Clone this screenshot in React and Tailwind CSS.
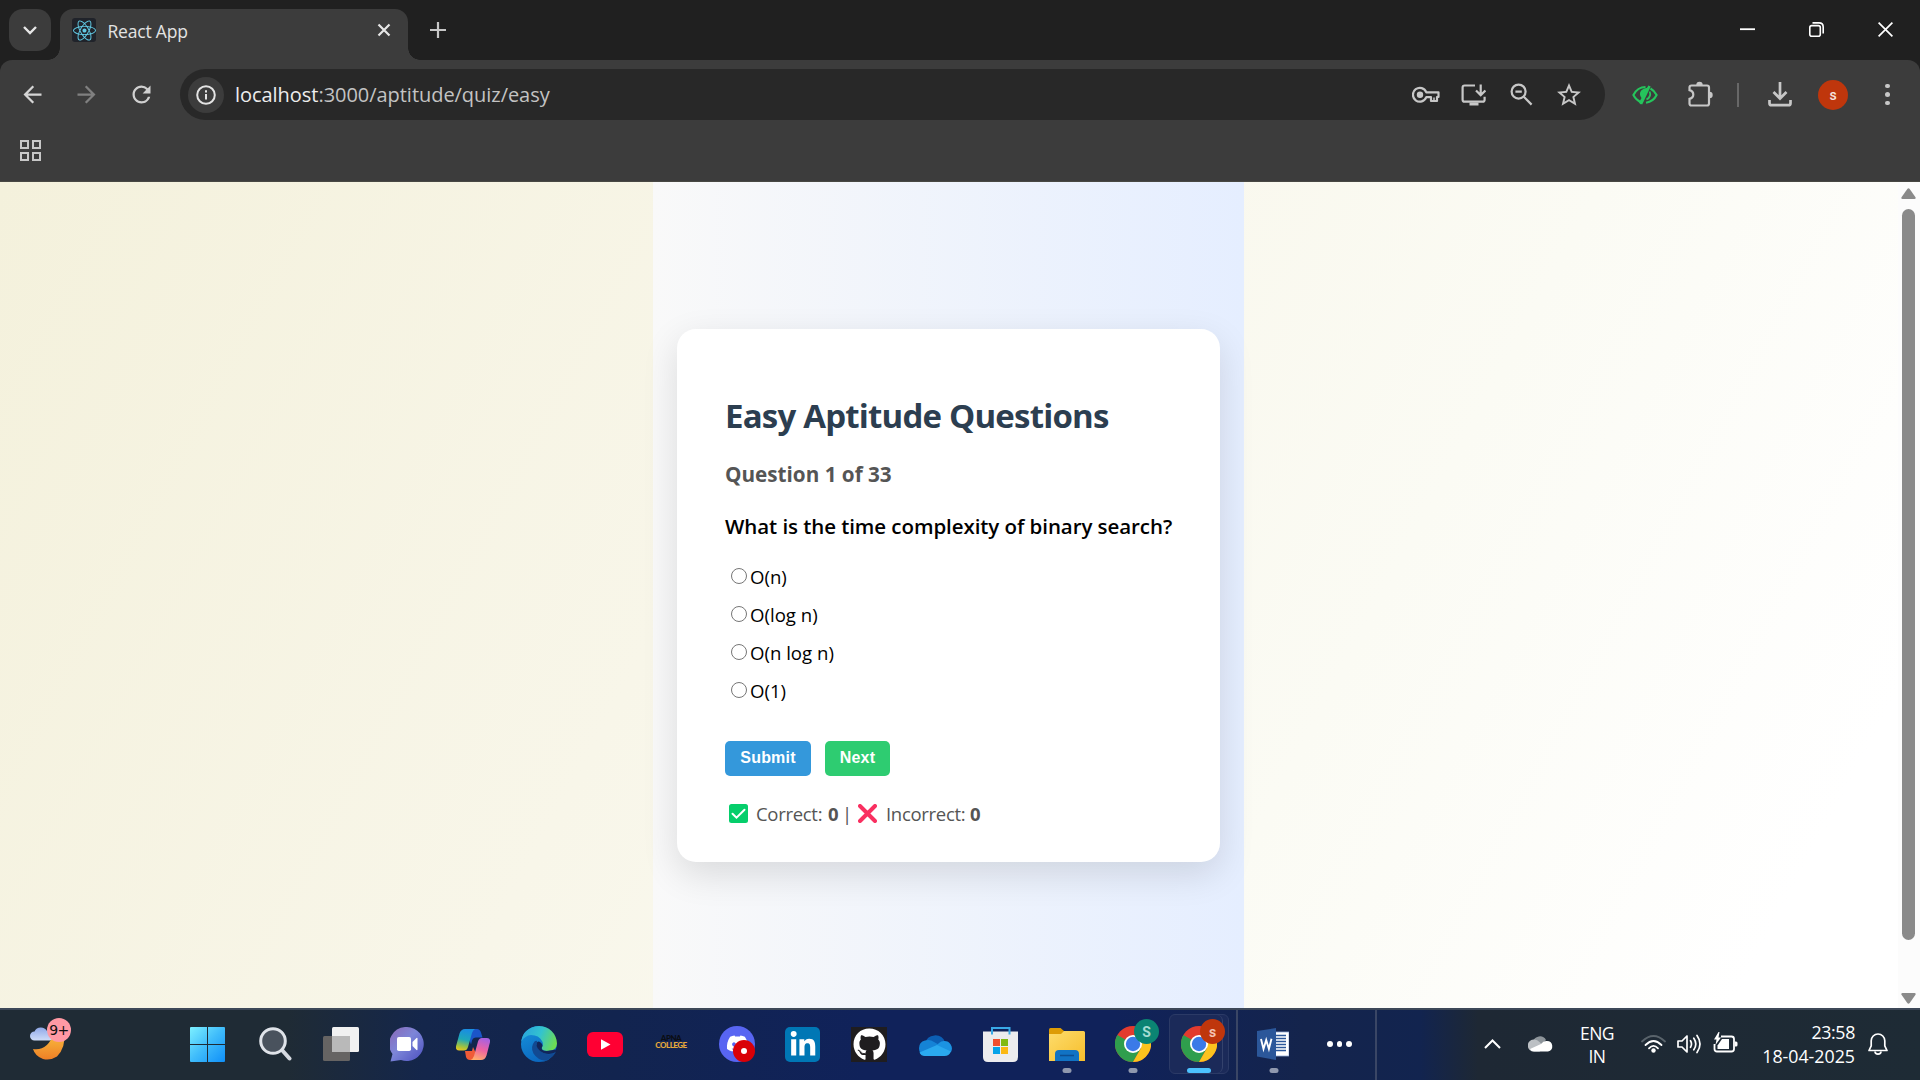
import React from 'react';
import { FaReact, FaDiscord, FaGithub, FaLinkedinIn } from 'react-icons/fa';
import { MdArrowBack, MdArrowForward, MdRefresh } from 'react-icons/md';

function TabStrip() {
  return (
    <div className="flex h-[60px] items-start bg-[#202020]">
      <button className="ml-[9px] mt-[9px] flex h-[42px] w-[42px] items-center justify-center rounded-[14px] bg-[#3c3c3c]">
        <svg width="14" height="9" viewBox="0 0 14 9" fill="none" stroke="#e6e6e6" strokeWidth="2.4">
          <path d="M1 1l6 6 6-6" />
        </svg>
      </button>
      <div className="ml-[-3px] mt-[48px] h-3 w-3 bg-[radial-gradient(circle_at_0_0,#202020_11.5px,#3c3c3c_12px)]" />
      <div className="mt-[9px] flex h-[51px] w-[348px] items-center rounded-t-[13px] bg-[#3c3c3c]">
        <div className="mb-[9px] ml-3 flex h-6 w-6 items-center justify-center rounded-[3px] bg-[#20232a]">
          <FaReact size={23} color="#61c9e3" />
        </div>
        <span className="mb-[7px] ml-[11.5px] whitespace-pre text-[17.5px] leading-6 tracking-[-0.2px] text-[#e3e3e3]">React App</span>
        <svg className="mb-[9px] ml-auto mr-[17px]" width="14" height="14" viewBox="0 0 14 14" stroke="#e6e6e6" strokeWidth="2.2">
          <path d="M1.5 1.5l11 11M12.500 1.5l-11 11" />
        </svg>
      </div>
      <div className="mt-[48px] h-3 w-3 bg-[radial-gradient(circle_at_100%_0,#202020_11.5px,#3c3c3c_12px)]" />
      <svg className="ml-[10px] mt-[22px]" width="16" height="16" viewBox="0 0 16 16" stroke="#c7c7c7" strokeWidth="2.2">
        <path d="M8 0v16M0 8h16" />
      </svg>
      <div className="ml-auto mr-[27px] mt-[22px] flex gap-[54px]">
        <svg width="15" height="15" viewBox="0 0 15 15" stroke="#fff" strokeWidth="1.8"><path d="M0 7.2h15" /></svg>
        <svg width="15" height="15" viewBox="0 0 15 15" fill="none" stroke="#fff" strokeWidth="1.6">
          <rect x=".8" y="3.600" width="10.500" height="10.600" rx="2" />
          <path d="M3.500 .9h6.500q4.200 0 4.200 4.200v6.400" />
        </svg>
        <svg width="15" height="15" viewBox="0 0 15 15" stroke="#fff" strokeWidth="1.7"><path d="M.6.6l13.800 13.800M14.400.6L.6 14.400" /></svg>
      </div>
    </div>
  );
}

function Omnibox() {
  return (
    <div className="flex h-[51px] w-[1425px] items-center rounded-full bg-[#282828]">
      <div className="ml-2 flex h-9 w-9 items-center justify-center rounded-full bg-[#3c3c3c]">
        <svg width="20" height="20" viewBox="0 0 20 20" fill="none" stroke="#e3e3e3" strokeWidth="2">
          <circle cx="10" cy="10" r="8.800" />
          <path d="M10 9v5.500M10 5.200v2.200" />
        </svg>
      </div>
      <span className="ml-[11px] whitespace-pre text-[20px] leading-7 tracking-[-0.04px] text-[#c3c3c3]">
        <span className="text-[#ededed]">localhost</span>:3000/aptitude/quiz/easy
      </span>
      <div className="ml-auto mr-[24px] flex items-center gap-[24px]">
        <svg className="-mr-[3px]" width="28" height="18" viewBox="0 0 28 18" fill="none" stroke="#c7c7c7" strokeWidth="2.200" strokeLinejoin="round">
          <path d="M14.300 6.300h12.200v4.700h-1.500v4h-6v-3.800h-4.700A6.900 6.900 0 1 1 14.300 6.300z" />
          <path d="M22 15v-3.500" strokeWidth="1.500" />
          <circle cx="8" cy="8.800" r="3.200" fill="#c7c7c7" stroke="none" />
        </svg>
        <svg width="25" height="24" viewBox="0 0 25 24" fill="none" stroke="#c7c7c7" strokeWidth="2.200">
          <path d="M14 2.500H3.600q-2 0-2 2v12.200q0 2 2 2h18q2 0 2-2v-3" />
          <path d="M19.700 1.500v10M15 7.500l4.700 4.600 4.700-4.600" />
          <path d="M8.500 21h9" strokeWidth="3" />
        </svg>
        <svg width="23" height="23" viewBox="0 0 23 23" fill="none" stroke="#c7c7c7" strokeWidth="2.200">
          <circle cx="8.600" cy="8.600" r="7" />
          <path d="M13.800 13.800l7.800 7.800M5.400 8.600h6.400" />
        </svg>
        <svg width="24" height="24" viewBox="2 2 20 20" fill="#c7c7c7">
          <path d="M22 9.240l-7.190-.62L12 2 9.190 8.630 2 9.240l5.460 4.730L5.820 21 12 17.270 18.180 21l-1.630-7.030L22 9.240zM12 15.400l-3.760 2.270 1-4.280-3.320-2.880 4.380-.38L12 6.100l1.710 4.040 4.380.38-3.320 2.880 1 4.280L12 15.400z" />
        </svg>
      </div>
    </div>
  );
}

function Toolbar() {
  return (
    <div className="bg-[#202020]">
      <div className="flex h-[122px] flex-col rounded-t-[12px] border-b border-[#484843] bg-[#3c3c3c] pt-[9px]">
        <div className="flex h-[51px] items-center">
          <MdArrowBack className="ml-[19px]" size={27} color="#d5d5d5" />
          <MdArrowForward className="ml-[27px]" size={27} color="#808080" />
          <MdRefresh className="mr-[25px] ml-[28px]" size={27} color="#d0d0d0" />
          <Omnibox />
          <svg className="ml-[27px]" width="26" height="20" viewBox="0 0 26 20" fill="none" stroke="#25c45c" strokeWidth="2.100">
            <path d="M9.800 17.500Q4.200 15.500 1.400 10 5.500 2 13.500 2" />
            <path d="M18.500 3.500Q22.500 5.800 24.600 10 21.500 16.500 14 17.800" />
            <path d="M17 .5L8.500 19.500 7 17.500 9.500 13Q6.500 9 9.200 5.500 12 2.500 15 3z" fill="#25c45c" stroke="none" />
            <path d="M17.600 6.500Q19.800 11.500 14.500 14.500" strokeWidth="1.800" />
            <path d="M17.500 1L9 19" strokeWidth="2.600" />
          </svg>
          <svg className="ml-[29px]" width="27" height="27" viewBox="0 0 27 27" fill="none" stroke="#c7c7c7" strokeWidth="2.200">
            <path d="M4.500 4.500H20q2 0 2 2v16q0 2-2 2H4.500q-2 0-2-2v-4.600q3.800-1 3.800-4.400t-3.800-4.400V6.500q0-2 2-2z" />
            <path d="M9.300 4a3.200 3.200 0 0 1 6.400 0zM22.500 10.800a3.200 3.200 0 0 1 0 6.400z" fill="#c7c7c7" stroke="none" />
          </svg>
          <div className="ml-[23px] h-[24px] w-[2px] bg-[#686868]" />
          <svg className="ml-[29px]" width="24" height="25" viewBox="0 0 24 25" fill="none" stroke="#c7c7c7" strokeWidth="2.700">
            <path d="M12 0v16M5.500 10l6.500 6.500 6.500-6.500" />
            <path d="M1.500 18v3.200q0 2 2 2h17q2 0 2-2V18" />
          </svg>
          <div className="ml-[26px] flex h-[30px] w-[30px] items-center justify-center rounded-full bg-[#bf360c] font-[Roboto] text-[14px] font-medium leading-none text-[#f6e3dc]">s</div>
          <div className="ml-[37px] flex flex-col gap-[4px]">
            <div className="h-[4.500px] w-[4.500px] rounded-full bg-[#c7c7c7]" />
            <div className="h-[4.500px] w-[4.500px] rounded-full bg-[#c7c7c7]" />
            <div className="h-[4.500px] w-[4.500px] rounded-full bg-[#c7c7c7]" />
          </div>
        </div>
        <div className="ml-[19.500px] mt-[19.500px] grid w-[21px] grid-cols-2 gap-[3px]">
          <div className="h-[9px] w-[9px] border-2 border-[#c7c7c7]" />
          <div className="h-[9px] w-[9px] border-2 border-[#c7c7c7]" />
          <div className="h-[9px] w-[9px] border-2 border-[#c7c7c7]" />
          <div className="h-[9px] w-[9px] border-2 border-[#c7c7c7]" />
        </div>
      </div>
    </div>
  );
}

function QuizCard() {
  return (
    <div className="flex h-[533px] w-[543px] flex-col rounded-[19px] bg-white px-[48px] pt-[64px] shadow-[0_12px_36px_rgba(0,0,0,0.12)]">
      <h2 className="whitespace-nowrap text-[33px] font-bold leading-[46px] tracking-[-0.8px] text-[#2c3e50]">Easy Aptitude Questions</h2>
      <h4 className="mt-[21px] text-[20.700px] font-bold leading-[28px] text-[#555]">Question 1 of 33</h4>
      <p className="mt-[24px] whitespace-nowrap text-[20.500px] font-semibold leading-[28px] tracking-[-0.07px] text-black">What is the time complexity of binary search?</p>
      <div className="mt-[18px]">
        {['O(n)', 'O(log n)', 'O(n log n)', 'O(1)'].map((o) => (
          <label key={o} className="flex h-[38px] items-center text-[18.600px] leading-[38px] text-black">
            <span className="mb-[1px] ml-[6px] mr-[3.500px] h-[15.500px] w-[15.500px] rounded-full border-[1.500px] border-[#767676] bg-white" />
            {o}
          </label>
        ))}
      </div>
      <div className="mt-[31px] flex gap-[14px] font-['Liberation_Sans',Arial,sans-serif] text-[16px] font-bold leading-[33px] text-white">
        <button className="h-[35px] w-[86px] rounded-[5px] bg-[#3498db] pb-[2px] tracking-[0.200px]">Submit</button>
        <button className="h-[35px] w-[65px] rounded-[5px] bg-[#2ecc71] pb-[2px] tracking-[0.200px]">Next</button>
      </div>
      <div className="mt-[24px] flex h-[28px] items-center whitespace-pre text-[18.500px] leading-[28px] tracking-[-0.3px] text-[#555]">
        <svg className="ml-[4px] mr-[8px]" width="19" height="19" viewBox="0 0 19 19">
          <rect width="19" height="19" rx="2.500" fill="#05ce6b" />
          <path d="M3.500 9.700l4 4 8-8" fill="none" stroke="#fff" strokeWidth="2" strokeLinecap="round" />
        </svg>
        <span className="w-[72px]">Correct:</span>
        <b className="w-[14px]">0</b>
        <span className="w-[16px]">|</span>
        <svg className="mr-[9px]" width="19" height="19" viewBox="0 0 19 19" stroke="#f92f60" strokeWidth="4" strokeLinecap="round">
          <path d="M2 2l15 15M17 2L2 17" />
        </svg>
        <span className="w-[84px]">Incorrect:</span>
        <b>0</b>
      </div>
    </div>
  );
}

function Viewport() {
  return (
    <div className="flex h-[826px] bg-[linear-gradient(118deg,#f4f1dc_0%,#f8f6e9_38%,#fbfbf4_68%,#ffffff_92%)]">
      <div className="ml-[653px] flex w-[591px] items-center justify-center bg-[linear-gradient(90deg,#f9f9f9,#e5eeff)]">
        <QuizCard />
      </div>
      <div className="ml-auto flex w-[22px] flex-col items-center bg-[#fcfcfc] pr-[2px] pt-[6px]">
        <svg width="15" height="11" viewBox="0 0 15 11" fill="#8a8a8a"><path d="M6.300 1q1.200-1.500 2.400 0l5.800 8.200q.7 1.800-1 1.800H1.500q-1.700 0-1-1.800z" /></svg>
        <div className="mt-[10px] h-[731px] w-[13px] rounded-full bg-[#8a8a8a]" />
        <svg className="mt-[53px]" width="15" height="11" viewBox="0 0 15 11" fill="#8a8a8a"><path d="M6.300 10q1.200 1.500 2.400 0l5.800-8.200q.7-1.800-1-1.800H1.500q-1.700 0-1 1.800z" /></svg>
      </div>
    </div>
  );
}

function Weather() {
  return (
    <div className="relative ml-[30px] mt-[17px] h-[36px] w-[42px]">
      <svg width="36" height="36" viewBox="0 0 36 36">
        <defs>
          <linearGradient id="moon" x1="0" y1="0" x2="0" y2="1"><stop offset="0" stopColor="#f9bc3e" /><stop offset="1" stopColor="#ee7f26" /></linearGradient>
          <linearGradient id="cl" x1="0" y1="0" x2="0" y2="1"><stop offset="0" stopColor="#8fa8e8" /><stop offset="1" stopColor="#cfdcf8" /></linearGradient>
        </defs>
        <path d="M3 24Q18 26 23 9H34Q36 22 27 31.500 20 36 13 34 5 31 3 24z" fill="url(#moon)" />
        <path d="M4.500 15.500a4.500 4.500 0 0 1 0-9A7 7 0 0 1 17 6a5 5 0 0 1 3 9.500z" fill="url(#cl)" />
      </svg>
      <div className="absolute left-[17px] top-[-7px] flex h-[24px] w-[24px] items-center justify-center rounded-full bg-[#ff99a4] font-['DejaVu_Sans',sans-serif] text-[14px] leading-none tracking-[-0.5px] text-[#111]">9+</div>
    </div>
  );
}

function Chrome({ badge, label }) {
  return (
    <div className="relative h-9 w-9">
      <svg width="36" height="36" viewBox="0 0 36 36">
        <circle cx="18" cy="18" r="18" fill="#e33b2e" />
        <path d="M18 18L2.400 9A18 18 0 0 0 18 36l7.800-13.500z" fill="#2f9e4d" />
        <path d="M18 9h15.600A18 18 0 0 1 18 36l7.800-13.500z" fill="#fcc31e" />
        <path d="M18 9H33.600L30 18z" fill="#fcc31e" />
        <circle cx="18" cy="18" r="9" fill="#fff" />
        <circle cx="18" cy="18" r="7.200" fill="#3b7ae8" />
      </svg>
      <div className={badge + ' absolute left-[19px] top-[-7px] flex h-[25px] w-[25px] items-center justify-center rounded-full font-[Roboto] text-[14px] font-bold leading-none'}>{label}</div>
    </div>
  );
}

function Dot() {
  return <div className="absolute left-1/2 top-[42px] h-[5px] w-[9px] -translate-x-1/2 rounded-full bg-[#8f98ae]" />;
}

function TaskIcons() {
  return (
    <div className="ml-[118px] mt-[19px] flex items-start">
      <svg width="35" height="35" viewBox="0 0 35 35">
        <defs><linearGradient id="win" x1="0" y1="0" x2="1" y2="1"><stop offset="0" stopColor="#7df0ff" /><stop offset=".5" stopColor="#3fbcfb" /><stop offset="1" stopColor="#0f8ff8" /></linearGradient></defs>
        <path d="M1 0h16v17H0V1q0-1 1-1zM18 0h16q1 0 1 1v16H18zM0 18h17v17H1q-1 0-1-1zM18 18h17v16q0 1-1 1H18z" fill="url(#win)" />
      </svg>
      <svg className="ml-[34px]" width="33" height="35" viewBox="0 0 33 35">
        <path d="M22.500 22.500l8 9" stroke="#d5d9e0" strokeWidth="4" strokeLinecap="round" />
        <circle cx="14" cy="14" r="12.300" fill="#49525d" stroke="#dfe3e9" strokeWidth="3" />
      </svg>
      <svg className="ml-[31px]" width="36" height="34" viewBox="0 0 36 34">
        <rect x="9" width="27" height="25" rx="1.500" fill="#f1f1f1" />
        <rect y="9" width="27" height="25" rx="1.500" fill="#666463" />
        <rect x="9" y="9" width="18" height="16" fill="#b9b9b9" />
      </svg>
      <svg className="ml-[31px]" width="34" height="35" viewBox="0 0 34 35">
        <defs><linearGradient id="chat" x1="0" y1="0" x2="1" y2="1"><stop offset="0" stopColor="#8b67b5" /><stop offset=".45" stopColor="#7d86d8" /><stop offset="1" stopColor="#4b4fc0" /></linearGradient></defs>
        <path d="M17 0a17 17 0 1 1-6 33L.5 34.500 2.500 27A17 17 0 0 1 17 0z" fill="url(#chat)" />
        <rect x="7" y="10" width="14" height="14" rx="1.800" fill="#fff" />
        <path d="M22.500 15l4-4q1-.5 1 .8v10.500q0 1.300-1 .8l-4-4z" fill="#fff" />
      </svg>
      <svg className="ml-[32px] mt-[2px]" width="34" height="31" viewBox="0 0 34 31">
        <defs>
          <linearGradient id="cp1" x1=".3" y1="0" x2=".1" y2="1"><stop offset="0" stopColor="#1a8ee0" /><stop offset=".45" stopColor="#1fa8b8" /><stop offset=".8" stopColor="#a8c33a" /><stop offset="1" stopColor="#f2c61c" /></linearGradient>
          <linearGradient id="cp2" x1=".6" y1="0" x2=".3" y2="1"><stop offset="0" stopColor="#a861e0" /><stop offset=".5" stopColor="#ee63a2" /><stop offset="1" stopColor="#ffae6b" /></linearGradient>
        </defs>
        <path d="M10 0h11q3 0 4 3.500l1.500 5H20q-3 0-4 3l-1 4L10 0z" fill="#1b55c9" />
        <path d="M9 22h7l1-4 6 13H14q-3 0-4-3z" fill="#ef5b37" />
        <path d="M9 0h10q-2 1-3 4l-4 14q-1 3.500-4 3.500H3q-4.500 0-2.500-6l3-11Q5 0 9 0z" fill="url(#cp1)" />
        <path d="M25 31H14.500q2.500-1 3.500-4l4-14.500q1-3.500 4-3.500h5q4.500 0 2.500 6l-3 11.500Q29 31 25 31z" fill="url(#cp2)" />
      </svg>
      <svg className="ml-[31px] -mt-[1px]" width="36" height="36" viewBox="0 0 36 36">
        <defs>
          <linearGradient id="e1" x1="0" y1=".3" x2="1" y2=".6"><stop offset="0" stopColor="#2aa5dd" /><stop offset=".5" stopColor="#33c3cf" /><stop offset="1" stopColor="#6fdc4f" /></linearGradient>
          <linearGradient id="e2" x1="0" y1="0" x2=".5" y2="1"><stop offset="0" stopColor="#1794dc" /><stop offset="1" stopColor="#0b67bf" /></linearGradient>
        </defs>
        <path d="M18 0A18 18 0 0 0 18 36Q29 36 34.500 26L36 18z" fill="url(#e2)" />
        <path d="M18 0A18 18 0 0 1 36 17.500Q35.500 25 27 25 19.500 25 20.800 21 23 18.500 21 15 18 9 10 9 4 9.500 .3 15.500 2 1.500 18 0z" fill="url(#e1)" />
        <path d="M13.500 15.500Q9 21 12.500 27.500 16.500 34 24.500 34.800 31.500 32 35 26 29.500 29.800 22.500 27 14.500 23 16 15 14.800 14.500 13.500 15.500z" fill="#124a92" />
        <path d="M19 16q4 3 1.800 5.500-.8 3 4.700 3.600L35.500 23.500 35 26q-6 3.500-12.500 1Q14 23 16 16.500 17 15 19 16z" fill="#11265a" />
      </svg>
      <svg className="ml-[30px] mt-[5px]" width="36" height="25" viewBox="0 0 36 25">
        <rect width="36" height="25" rx="6" fill="#ff0033" />
        <path d="M14 7.300v10.400l9.500-5.200z" fill="#fff" />
      </svg>
      <div className="ml-[31px] mt-[8px] flex w-[34px] flex-col items-center whitespace-nowrap font-['Lato',sans-serif] text-[8px] font-black leading-[7.500px] tracking-[-0.5px]">
        <p className="-mb-[0.500px] text-[#0b0d12]">APNA</p>
        <p className="text-[#e5a83a]">COLLEGE</p>
      </div>
      <div className="relative -mt-px ml-[31px] flex h-9 w-9 items-center justify-center rounded-full bg-[#5865f2]">
        <FaDiscord className="mb-[2px]" size={23} color="#fff" />
        <div className="absolute left-[14px] top-[14px] flex h-[22px] w-[22px] items-center justify-center rounded-full bg-[#d90007]">
          <div className="h-[6px] w-[6px] rounded-full bg-white" />
        </div>
      </div>
      <div className="ml-[30px] flex h-[35px] w-[35px] items-center justify-center rounded-[5px] bg-[#0077b5]">
        <FaLinkedinIn size={28} color="#fff" />
      </div>
      <div className="ml-[31px] flex h-[35px] w-[36px] items-center justify-center bg-[#1f1d1f]">
        <FaGithub size={33} color="#fff" />
      </div>
      <svg className="ml-[30px] mt-[6px]" width="35" height="23" viewBox="0 0 35 23">
        <path d="M8 10.500A10.500 10.500 0 0 1 28 9l-8 8z" fill="#0c5fb4" />
        <path d="M8 7.500Q13 6 17 9l9 5-10 9H8A8 8 0 0 1 8 7.500z" fill="#1583d6" />
        <path d="M17 15l5-5q2-2 5-2a7.500 7.500 0 0 1 7 11z" fill="#1b93e2" />
        <path d="M2.500 19.500L20 12l14 6.500Q32 23 27.500 23H8q-4 0-5.500-3.500z" fill="#2aa9ef" />
      </svg>
      <svg className="ml-[31px]" width="35" height="35" viewBox="0 0 35 35">
        <path d="M0 4.500h35V30q0 5-5 5H5q-5 0-5-5z" fill="#ececee" />
        <path d="M9 7.500V1h17.500v6.500" fill="none" stroke="#39a9e6" strokeWidth="2" />
        <path d="M10 12h7v7h-7z" fill="#f1502f" /><path d="M18 12h7v7h-7z" fill="#80b912" /><path d="M10 20h7v7h-7z" fill="#06a3e9" /><path d="M18 20h7v7h-7z" fill="#fbb813" />
      </svg>
      <div className="relative ml-[31px] mt-px h-[34px] w-[36px]">
        <svg width="36" height="33" viewBox="0 0 36 33">
          <defs><linearGradient id="fold" x1="0" y1="0" x2="1" y2="1"><stop offset="0" stopColor="#fddc6c" /><stop offset="1" stopColor="#f7be2c" /></linearGradient></defs>
          <path d="M0 1.500Q0 0 1.500 0h10l3.500 3V9H0z" fill="#dd9c06" />
          <path d="M0 6h12l3-3h19.500q1.500 0 1.500 1.500V33H0z" fill="url(#fold)" />
          <path d="M6 33v-7q0-4 4-4h16q4 0 4 4v7z" fill="#1173c4" />
          <path d="M11 27.500h14" stroke="#0d4f92" strokeWidth="1.500" />
        </svg>
        <div className="absolute -top-[2px] left-0 w-full"><Dot /></div>
      </div>
      <div className="relative -mt-px ml-[30px] h-9 w-9">
        <Chrome badge="bg-[#0b8473] text-[#a5dcd2]" label="S" />
        <Dot />
      </div>
      <div className="relative -mt-[13px] ml-[18px] h-[60px] w-[60px] rounded-[6px] border border-[#2b3a66] bg-[#1b2a59]">
        <div className="h-[58px] w-[53px] rounded-[6px] border-r border-[#34426c] pl-[11px] pt-[11px]">
          <Chrome badge="bg-[#bf360c] text-[#f3c2b2]" label="s" />
        </div>
        <div className="absolute left-[17px] top-[53px] h-[5px] w-[24px] rounded-full bg-[#4cc2ff]" />
      </div>
      <div className="-mt-[17px] ml-[7px] h-[70px] w-[2px] bg-[#3a4665]" />
      <div className="relative ml-[19px] mt-px h-[34px] w-[32px]">
        <svg width="32" height="32" viewBox="0 0 32 32">
          <path d="M18 4h14v24H18z" fill="#fff" stroke="#8fa9d6" strokeWidth=".8" />
          <path d="M19 7.500h10M19 10.500h10M19 13.500h10M19 16.500h10M19 19.500h10M19 22.500h10" stroke="#2b579a" strokeWidth="1.300" />
          <path d="M0 3L19 0v32L0 28.500z" fill="#2b579a" />
          <path d="M4 11l2.500 10 2.700-9 2.700 9 2.600-10.300" fill="none" stroke="#fff" strokeWidth="1.900" />
        </svg>
        <div className="absolute -top-[2px] left-px w-full"><Dot /></div>
      </div>
      <div className="ml-[38px] mt-[14px] flex gap-[4px]">
        <div className="h-[5.500px] w-[5.500px] rounded-full bg-white" />
        <div className="h-[5.500px] w-[5.500px] rounded-full bg-white" />
        <div className="h-[5.500px] w-[5.500px] rounded-full bg-white" />
      </div>
      <div className="-mt-[17px] ml-[23px] h-[70px] w-[2px] bg-[#3a4665]" />
    </div>
  );
}

function Tray() {
  return (
    <div className="ml-auto mr-[32px] flex items-start text-white">
      <svg className="mt-[31px]" width="17" height="10" viewBox="0 0 17 10" fill="none" stroke="#fff" strokeWidth="2"><path d="M1 9l7.500-7.500L16 9" /></svg>
      <svg className="ml-[27px] mt-[27px]" width="25" height="17" viewBox="0 0 25 17">
        <path d="M5 7a7 7 0 0 1 13-2l-5 6z" fill="#8d949a" />
        <path d="M5.500 4.500q3.500-.5 6 2.500l6 6-6 3.500H6a6 6 0 0 1-.5-12z" fill="#bcc0c4" />
        <path d="M2 14l11-5q2.500-3.500 6-3a5.300 5.300 0 0 1 1 10.500H6q-3 0-4-2.500z" fill="#fff" />
      </svg>
      <div className="ml-[25px] mt-[14px] w-[38px] text-center text-[17.500px] leading-[23px] tracking-[-0.500px]">
        <p>ENG</p>
        <p>IN</p>
      </div>
      <svg className="ml-[25px] mt-[27px]" width="25" height="18" viewBox="0 0 25 18" fill="none" strokeWidth="1.800" strokeLinecap="round">
        <path d="M1 6.500Q12.500-4.500 24 6.500" stroke="#59636b" />
        <path d="M4.500 10Q12.500 2 20.500 10M8 13.300Q12.500 8.500 17 13.300" stroke="#fff" />
        <circle cx="12.500" cy="15.500" r="2.200" fill="#fff" />
      </svg>
      <svg className="ml-[11px] mt-[26px]" width="25" height="20" viewBox="0 0 25 20" fill="none" stroke="#fff" strokeWidth="1.700" strokeLinecap="round" strokeLinejoin="round">
        <path d="M1 7h4l5-5v16l-5-5H1z" />
        <path d="M13.500 6.700q2 3.300 0 6.600M16.800 4.200q4 5.800 0 11.600M20 1.500q6 8.500 0 17" />
      </svg>
      <svg className="ml-[11px] mt-[24px]" width="25" height="21" viewBox="0 0 25 21">
        <path d="M8 4.500h10.500q2.500 0 2.500 2.500v10q0 2.500-2.500 2.500H4q-2.500 0-2.500-2.500v-5" fill="none" stroke="#fff" strokeWidth="1.800" />
        <path d="M9 7h7v10H4.500v-3.500z" fill="#fff" />
        <path d="M22 9.500h1q1.500 0 1.500 1.500v2q0 1.500-1.500 1.500h-1z" fill="#fff" />
        <path d="M5.500 0L1 7.500h2.500L2.500 13 8 5.500H5.500L6.500 0z" fill="#fff" />
      </svg>
      <div className="ml-[24px] mt-[12px] w-[93px] whitespace-nowrap text-right text-[17.800px] leading-[24px]">
        <p className="tracking-[-0.350px]">23:58</p>
        <p>18-04-2025</p>
      </div>
      <svg className="ml-[13px] mt-[25px]" width="20" height="22" viewBox="0 0 20 22" fill="none" stroke="#fff" strokeWidth="1.700" strokeLinejoin="round">
        <path d="M10 1a6.800 6.800 0 0 1 6.800 6.800v5L19 17.500H1l2.200-4.700v-5A6.800 6.800 0 0 1 10 1z" />
        <path d="M7 18.500a3 2.600 0 0 0 6 0" />
      </svg>
    </div>
  );
}

export default function App() {
  return (
    <div className="flex h-[1080px] w-[1920px] flex-col overflow-hidden font-['Open_Sans','Noto_Sans',sans-serif]">
      <TabStrip />
      <Toolbar />
      <Viewport />
      <div className="flex h-[72px] items-start bg-[linear-gradient(90deg,#1f2b35_0%,#1f2b35_15%,#14264b_22%,#12244f_32%,#10225a_45%,#10225a_58%,#14244c_68%,#12244f_74%,#1e2834_77%,#1e2b35_100%)] shadow-[inset_0_2px_0_#3d4858]">
        <Weather />
        <TaskIcons />
        <Tray />
      </div>
    </div>
  );
}
